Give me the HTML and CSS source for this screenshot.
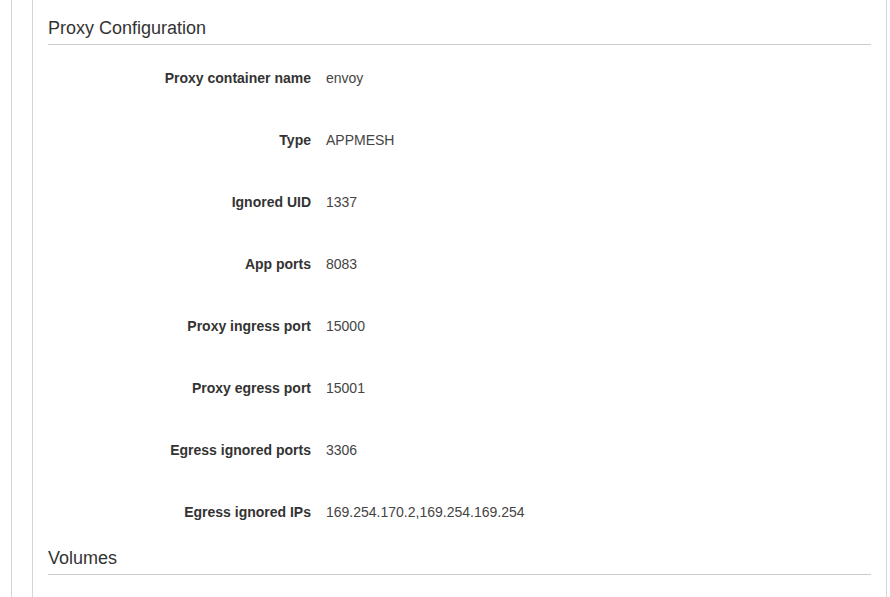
FILE: index.html
```html
<!DOCTYPE html>
<html>
<head>
<meta charset="utf-8">
<link rel="stylesheet" href="styles.css">
</head>
<body>
<div class="outer">
  <div class="panel">
    <section class="section">
      <h2 class="section-title">Proxy Configuration</h2>
      <dl class="details">
        <div class="row"><dt>Proxy container name</dt><dd>envoy</dd></div>
        <div class="row"><dt>Type</dt><dd>APPMESH</dd></div>
        <div class="row"><dt>Ignored UID</dt><dd>1337</dd></div>
        <div class="row"><dt>App ports</dt><dd>8083</dd></div>
        <div class="row"><dt>Proxy ingress port</dt><dd>15000</dd></div>
        <div class="row"><dt>Proxy egress port</dt><dd>15001</dd></div>
        <div class="row"><dt>Egress ignored ports</dt><dd>3306</dd></div>
        <div class="row"><dt>Egress ignored IPs</dt><dd>169.254.170.2,169.254.169.254</dd></div>
      </dl>
    </section>
    <section class="section">
      <h2 class="section-title">Volumes</h2>
    </section>
  </div>
</div>
</body>
</html>
```

FILE: styles.css
```css
html, body {
  margin: 0;
  padding: 0;
  background: #fff;
  font-family: "Liberation Sans", Arial, sans-serif;
  color: #333;
}
.outer {
  margin-left: 11px;
  border-left: 1px solid #d5d5d5;
  padding-left: 20px;
  height: 597px;
  box-sizing: border-box;
  width: 876px;
}
.panel {
  border-left: 1px solid #d5d5d5;
  border-right: 1px solid #d5d5d5;
  padding: 0 15px;
  height: 100%;
  width: 855px;
  box-sizing: border-box;
}
.section-title {
  margin: 0;
  font-size: 18px;
  line-height: 20px;
  font-weight: normal;
  color: #333;
  padding: 18px 0 6px;
  border-bottom: 1px solid #ccc;
}
.details {
  margin: 0;
  padding: 23px 0 8px;
  display: flex;
  flex-direction: column;
  gap: 42px;
}
.row {
  display: grid;
  grid-template-columns: 263px 1fr;
  column-gap: 15px;
  font-size: 14px;
  line-height: 20px;
}
.row dt {
  text-align: right;
  font-weight: bold;
  color: #333;
}
.row dd {
  margin: 0;
  color: #444;
}
```
